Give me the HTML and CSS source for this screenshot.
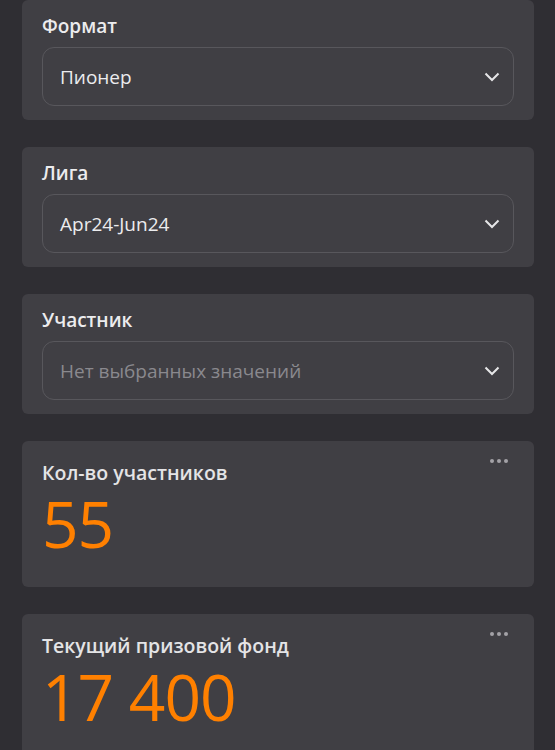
FILE: index.html
```html
<!DOCTYPE html>
<html lang="ru">
<head>
  <meta charset="UTF-8" />
  <meta name="viewport" content="width=device-width, initial-scale=1.0" />
  <title>Лига</title>
  <link rel="stylesheet" href="styles.css">
</head>
<body>
  <main class="board">
    <section class="card filter">
      <div class="filter-label">Формат</div>
      <div class="select">
        <span class="select-value">Пионер</span>
        <svg class="chevron" width="16" height="10" viewBox="0 0 16 10"><path d="M1.5 1.5 L8 8 L14.5 1.5" /></svg>
      </div>
    </section>

    <section class="card filter">
      <div class="filter-label">Лига</div>
      <div class="select">
        <span class="select-value">Apr24-Jun24</span>
        <svg class="chevron" width="16" height="10" viewBox="0 0 16 10"><path d="M1.5 1.5 L8 8 L14.5 1.5" /></svg>
      </div>
    </section>

    <section class="card filter">
      <div class="filter-label">Участник</div>
      <div class="select">
        <span class="select-value placeholder">Нет выбранных значений</span>
        <svg class="chevron" width="16" height="10" viewBox="0 0 16 10"><path d="M1.5 1.5 L8 8 L14.5 1.5" /></svg>
      </div>
    </section>

    <section class="card stat">
      <div class="stat-menu"><i></i><i></i><i></i></div>
      <div class="stat-title">Кол-во участников</div>
      <div class="stat-value">55</div>
    </section>

    <section class="card stat">
      <div class="stat-menu"><i></i><i></i><i></i></div>
      <div class="stat-title">Текущий призовой фонд</div>
      <div class="stat-value">17 400</div>
    </section>
  </main>
</body>
</html>
```

FILE: styles.css
```css
body {
  margin: 0;
  background: #2f2e33;
  font-family: 'Open Sans', 'Noto Sans', sans-serif;
  color: #ececee;
}
.board {
  display: flex;
  flex-direction: column;
  gap: 27px;
  padding: 0 21px 0 22px;
}
.card {
  background: #403f44;
  border-radius: 6px;
}
.filter {
  height: 120px;
  box-sizing: border-box;
  padding: 14px 20px 14px 20px;
}
.filter-label {
  font-size: 19px;
  font-weight: 600;
  line-height: 24px;
  margin-bottom: 9px;
}
.select {
  display: flex;
  align-items: center;
  justify-content: space-between;
  height: 59px;
  box-sizing: border-box;
  border: 1px solid #58575c;
  border-radius: 12px;
  padding: 0 13px 0 17px;
}
.select-value {
  font-size: 19px;
}
.placeholder {
  color: #8a898e;
}
.chevron path {
  fill: none;
  stroke: #e6e6e8;
  stroke-width: 2;
}
.stat {
  position: relative;
  height: 146px;
  box-sizing: border-box;
  padding: 19px 20px 0;
}
.stat-menu {
  position: absolute;
  top: 18px;
  right: 26px;
  display: flex;
  gap: 3px;
}
.stat-menu i {
  width: 4px;
  height: 4px;
  border-radius: 50%;
  background: #a3a2a7;
}
.stat-title {
  font-size: 19.5px;
  font-weight: 600;
  line-height: 26px;
  color: #e4e4e6;
}
.stat-value {
  margin-top: 6px;
  font-size: 64px;
  line-height: 64px;
  color: #ff8000;
  letter-spacing: -1px;
}
```
